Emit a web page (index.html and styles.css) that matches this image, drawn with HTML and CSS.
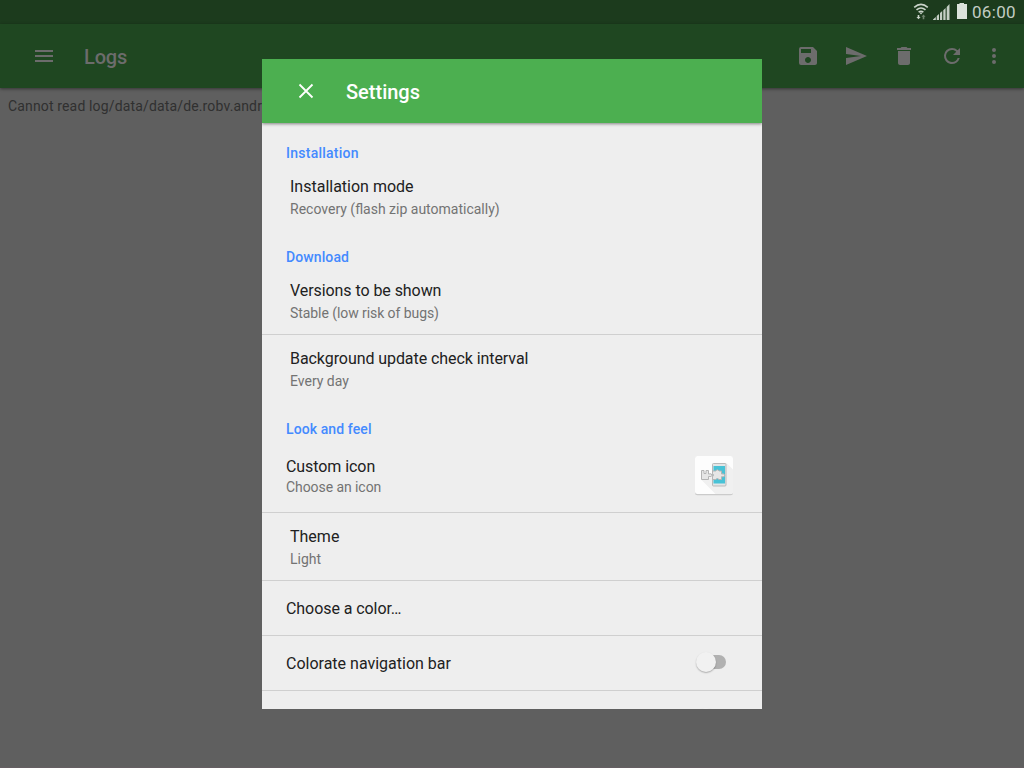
FILE: index.html
```html
<!DOCTYPE html>
<html lang="en">
<head>
<meta charset="utf-8">
<title>Settings</title>
<link rel="stylesheet" href="styles.css">
</head>
<body>
<div class="screen">
  <div class="status">
    <svg width="56" height="24" viewBox="0 0 56 24">
      <g fill="none" stroke="#c9d3c9" stroke-width="1.600">
        <path d="M2.200 7.300Q9 1.400 15.800 7.300M4.500 9.900Q9 6.100 13.500 9.900M6.600 12.200Q9 10.400 11.400 12.200"/>
      </g>
      <path fill="#c9d3c9" d="M7.300 12.600h3.400L9 14.400zM5.700 15h1.600v2h1.300l-2.100 2.300L4.400 17h1.300z"/>
      <path fill="#70856f" d="M10.700 19.200v-2.400H9.500l2-2.200 2 2.200h-1.200v2.400z"/>
      <path fill="#c5cfc5" d="M21 20v-.5l2.800-2.500v3zM24.700 20v-4l2.300-2v6zM28 20v-7l2.200-2v9zM31.300 20v-9.700l2.300-2.200V20zM34.700 20V6.900L37.500 4v16z"/>
      <path fill="#dbe3db" d="M45 4h2.500V3h4.500v1h3v15H45z"/>
    </svg>
    <span class="clock">06:00</span>
  </div>
  <div class="toolbar">
    <svg class="icon" viewBox="0 0 24 24"><path d="M3 18h18v-2H3v2zm0-5h18v-2H3v2zm0-7v2h18V6H3z"/></svg>
    <div class="toolbar-title">Logs</div>
    <div class="actions">
      <svg class="icon" viewBox="0 0 24 24"><path d="M17 3H5a2 2 0 0 0-2 2v14a2 2 0 0 0 2 2h14c1.100 0 2-.9 2-2V7l-4-4zm-5 16c-1.660 0-3-1.340-3-3s1.340-3 3-3 3 1.340 3 3-1.340 3-3 3zm3-10H5V5h10v4z"/></svg>
      <svg class="icon" viewBox="0 0 24 24"><path d="M2.010 21L23 12 2.010 3 2 10l15 2-15 2z"/></svg>
      <svg class="icon" viewBox="0 0 24 24"><path d="M6 19c0 1.100.9 2 2 2h8c1.100 0 2-.9 2-2V7H6v12zM19 4h-3.500l-1-1h-5l-1 1H5v2h14V4z"/></svg>
      <svg class="icon" viewBox="0 0 24 24"><path d="M17.650 6.350A7.958 7.958 0 0 0 12 4a8 8 0 1 0 7.730 10h-2.080A5.990 5.990 0 0 1 12 18a6 6 0 1 1 0-12c1.660 0 3.140.69 4.220 1.780L13 11h7V4l-2.350 2.350z"/></svg>
      <svg class="icon overflow" viewBox="0 0 24 24"><path d="M12 8a2 2 0 1 0 0-4 2 2 0 0 0 0 4zm0 2a2 2 0 1 0 0 4 2 2 0 0 0 0-4zm0 6a2 2 0 1 0 0 4 2 2 0 0 0 0-4z"/></svg>
    </div>
  </div>
  <div class="log">Cannot read log/data/data/de.robv.andr</div>

  <div class="dialog">
    <div class="dialog-bar">
      <svg class="close" viewBox="0 0 24 24"><path d="M5.500 5.500l13 13M18.500 5.500l-13 13"/></svg>
      <div class="dialog-title">Settings</div>
    </div>
    <div class="list">
      <div class="category wide">Installation</div>
      <div class="item">
        <div class="title">Installation mode</div>
        <div class="summary">Recovery (flash zip automatically)</div>
      </div>
      <div class="category">Download</div>
      <div class="item divided">
        <div class="title tight">Versions to be shown</div>
        <div class="summary tight">Stable (low risk of bugs)</div>
      </div>
      <div class="item">
        <div class="title tight">Background update check interval</div>
        <div class="summary">Every day</div>
      </div>
      <div class="category">Look and feel</div>
      <div class="row icon-row divided">
        <div>
          <div class="title tight">Custom icon</div>
          <div class="summary tight">Choose an icon</div>
        </div>
        <svg class="app-icon" width="48" height="48" viewBox="0 0 48 48">
          <rect x="5" y="5.500" width="38" height="38.700" rx="2.500" fill="#cbcbcb"/>
          <rect x="5" y="5" width="38" height="38" rx="2.500" fill="#fdfdfd"/>
          <path fill="#f0f0f0" d="M11.500 29l11-3 14-14L43 18.500V41q0 2-2 2H25.500z"/>
          <rect x="22.500" y="12.500" width="13.500" height="22.500" rx="1" fill="#e2e6e7" stroke="#b9b9b9"/>
          <path fill="#48c2d6" d="M23.500 15H35v17.500H23.500z"/>
          <g fill="#e6e6e6" stroke="#b4b4b4">
            <path d="M11.500 19.500H14v3h2v-3h2.500V23q3.500-1 3.500 1.200t-3.500 1.300V28.500h-7z"/>
            <path d="M22.500 20h3q1.500-2.500 4 0h2v3q3.200-.8 3.200 1.300t-3.200 1.400v2.800H29q-1.500-1.800-3.500 0h-3v-2.700q2-1.800 0-3.300z"/>
          </g>
        </svg>
      </div>
      <div class="item divided">
        <div class="title">Theme</div>
        <div class="summary">Light</div>
      </div>
      <div class="row divided"><div class="title tight">Choose a color…</div></div>
      <div class="row divided">
        <div class="title">Colorate navigation bar</div>
        <div class="switch"><div class="thumb"></div></div>
      </div>
      <div class="row">
        <div class="title"></div>
        <div class="switch"><div class="thumb"></div></div>
      </div>
    </div>
  </div>
</div>
</body>
</html>
```
FILE: styles.css
```css
* { box-sizing: border-box; }
body { margin: 0; font-family: Roboto, sans-serif; }
.screen {
  position: relative;
  width: 1024px;
  height: 768px;
  overflow: hidden;
  background: #5f5f5f;
  border-bottom: 1px solid #655e62;
}
.status {
  height: 24px;
  background: #1c3b1d;
  display: flex;
  justify-content: flex-end;
  padding-right: 8px;
}
.clock {
  width: 48px;
  padding-left: 4px;
  font-size: 17px;
  letter-spacing: .3px;
  line-height: 25px;
  color: #c3cdc3;
  white-space: nowrap;
}
.toolbar {
  height: 64px;
  background: #1f4721;
  display: flex;
  align-items: center;
  padding: 0 18px 0 32px;
  box-shadow: 0 1px 3px rgba(0, 0, 0, .45);
}
.icon { width: 24px; height: 24px; fill: #6c6c6c; flex: none; }
.toolbar-title {
  margin-left: 28px;
  padding-top: 2px;
  font-size: 20px;
  font-weight: 500;
  letter-spacing: -.15px;
  color: #6c6c6c;
}
.actions { display: flex; gap: 24px; margin-left: auto; }
.overflow { margin-left: -6px; }
.log {
  padding: 10px 8px;
  font-size: 14px;
  line-height: 16px;
  letter-spacing: .15px;
  color: #303030;
}

.dialog {
  position: absolute;
  left: 262px;
  top: 59px;
  width: 500px;
  height: 650px;
  overflow: hidden;
  background: #eee;
}
.dialog-bar {
  height: 64px;
  background: #4caf50;
  display: flex;
  align-items: center;
  padding-left: 32px;
  box-shadow: 0 1px 3px rgba(0, 0, 0, .45);
}
.close { width: 24px; height: 24px; fill: none; stroke: #fff; stroke-width: 1.8; }
.dialog-title {
  margin-left: 28px;
  padding-top: 2px;
  font-size: 20px;
  font-weight: 500;
  color: #fff;
}
.list { padding-top: 3px; }
.category {
  height: 37px;
  padding: 19px 24px 0;
  font-size: 14px;
  font-weight: 500;
  line-height: 16px;
  letter-spacing: .1px;
  color: #448aff;
}
.category.wide { letter-spacing: .25px; }
.item { height: 67px; padding: 13px 28px 0; }
.title { font-size: 16px; line-height: 22px; color: #212121; }
.summary { font-size: 14px; line-height: 20px; color: #737373; }
.item .summary { margin-top: 1px; }
.tight { letter-spacing: -.07px; }
.divided { border-bottom: 1px solid #cfcfcf; }
.item.divided { height: 68px; }
.row {
  height: 55px;
  display: flex;
  align-items: center;
  justify-content: space-between;
  padding: 1px 24px 0;
}
.icon-row { height: 74px; }
.icon-row .summary { margin-top: -1px; }
.app-icon { margin-top: -2px; }
.switch {
  width: 27px;
  height: 14px;
  margin: -3px 12px 0 0;
  border-radius: 7px;
  background: #b1b1b1;
}
.thumb {
  width: 20px;
  height: 20px;
  margin: -3px 0 0 -3.500px;
  border-radius: 50%;
  background: #f1f1f1;
  box-shadow: 0 1px 1.500px rgba(0, 0, 0, .28);
}
```
